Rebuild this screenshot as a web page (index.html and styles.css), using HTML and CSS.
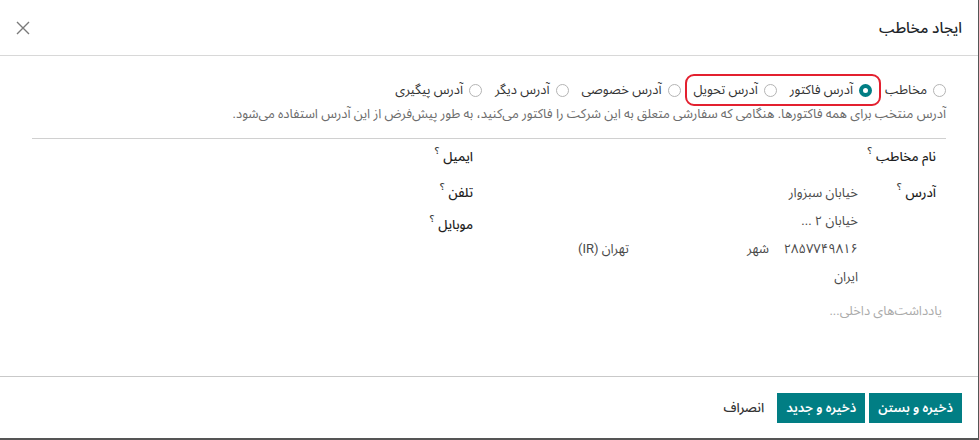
FILE: index.html
```html
<!DOCTYPE html>
<html lang="fa" dir="rtl">
<head>
<meta charset="utf-8">
<title>ایجاد مخاطب</title>
<link rel="stylesheet" href="styles.css">
</head>
<body>
<div class="modal">
  <header class="modal-header">
    <h4 class="modal-title">ایجاد مخاطب</h4>
    <button class="btn-close" type="button" aria-label="بستن">
      <svg width="14" height="14" viewBox="0 0 14 14"><path d="M1 1 L13 13 M13 1 L1 13" stroke="#7a7a7a" stroke-width="1.4" fill="none"/></svg>
    </button>
  </header>
  <main class="modal-body">
    <div class="sheet">
      <div class="radios">
        <label class="radio-item"><span class="radio"></span>مخاطب</label>
        <span class="highlight">
          <label class="radio-item"><span class="radio checked"></span>آدرس فاکتور</label>
          <label class="radio-item"><span class="radio"></span>آدرس تحویل</label>
        </span>
        <label class="radio-item"><span class="radio"></span>آدرس خصوصی</label>
        <label class="radio-item"><span class="radio"></span>آدرس دیگر</label>
        <label class="radio-item"><span class="radio"></span>آدرس پیگیری</label>
      </div>
      <p class="desc">آدرس منتخب برای همه فاکتورها. هنگامی که سفارشی متعلق به این شرکت را فاکتور می‌کنید، به طور پیش‌فرض از این آدرس استفاده می‌شود.</p>
      <hr class="sep">
      <div class="groups">
        <div class="group group-right">
          <div class="field field-name">
            <div class="lbl">نام مخاطب<sup>؟</sup></div>
            <div class="val"></div>
          </div>
          <div class="field">
            <div class="lbl">آدرس<sup>؟</sup></div>
            <div class="val address">
              <div class="line">خیابان سبزوار</div>
              <div class="line">خیابان ۲ ...</div>
              <div class="line line-split">
                <span class="cell cell-zip">۲۸۵۷۷۴۹۸۱۶</span>
                <span class="cell cell-city">شهر</span>
                <span class="cell cell-state">تهران (IR)</span>
              </div>
              <div class="line">ایران</div>
            </div>
          </div>
        </div>
        <div class="group group-left">
          <div class="field field-email">
            <div class="lbl">ایمیل<sup>؟</sup></div>
            <div class="val"></div>
          </div>
          <div class="field field-phone">
            <div class="lbl">تلفن<sup>؟</sup></div>
            <div class="val"></div>
          </div>
          <div class="field">
            <div class="lbl">موبایل<sup>؟</sup></div>
            <div class="val"></div>
          </div>
        </div>
      </div>
      <div class="notes">یادداشت‌های داخلی...</div>
    </div>
  </main>
  <footer class="modal-footer">
    <button class="btn btn-primary" type="button">ذخیره و بستن</button>
    <button class="btn btn-primary" type="button">ذخیره و جدید</button>
    <button class="btn btn-link" type="button">انصراف</button>
  </footer>
</div>
</body>
</html>
```

FILE: styles.css
```css
* { box-sizing: border-box; }

html, body {
  margin: 0;
  padding: 0;
  background: #ffffff;
}

body {
  font-family: Roboto, "Noto Sans Arabic", "Noto Naskh Arabic", "DejaVu Sans", sans-serif;
  font-size: 13px;
  color: #4a4a4a;
  direction: rtl;
}

.modal {
  width: 979px;
  height: 440px;
  border-right: 1px solid #555;
  border-bottom: 2px solid #555;
  display: flex;
  flex-direction: column;
  background: #fff;
}

.modal-header {
  height: 56px;
  flex: none;
  border-bottom: 1px solid #d8d8d8;
  padding: 0 16px;
  display: flex;
  align-items: center;
  justify-content: space-between;
}

.modal-title {
  margin: 0;
  font-size: 15px;
  font-weight: 500;
  color: #212529;
}

.btn-close {
  border: 0;
  background: transparent;
  padding: 0;
  width: 14px;
  height: 14px;
  display: flex;
  cursor: pointer;
}

.modal-body {
  flex: 1;
  padding: 24px 32px 0;
}

.radios {
  display: flex;
  align-items: center;
  gap: 13px;
  height: 20px;
  line-height: 20px;
  color: #333;
}

.highlight {
  position: relative;
  display: flex;
  align-items: center;
  gap: 13px;
  height: 20px;
}

.highlight::after {
  content: "";
  position: absolute;
  top: -6px;
  bottom: -6px;
  left: -9px;
  right: -9px;
  border: 2px solid #e3202f;
  border-radius: 9px;
  pointer-events: none;
}

.radio-item {
  display: flex;
  align-items: center;
  white-space: nowrap;
}

.radio {
  width: 13px;
  height: 13px;
  border: 1px solid #b4b4b4;
  border-radius: 50%;
  margin-left: 6px;
  background: #fff;
  flex: none;
}

.radio.checked {
  border: 4px solid #017e84;
  background: #fff;
}

.desc {
  margin: 5px 0 0;
  line-height: 18px;
  color: #6c6c6c;
  white-space: nowrap;
}

.sep {
  border: 0;
  border-top: 1px solid #d0d0d0;
  margin: 15px 0 4px;
  height: 0;
}

.groups {
  display: grid;
  grid-template-columns: 1fr 1fr;
  column-gap: 12px;
}

.group {
  padding-right: 10px;
}

.field {
  display: grid;
  grid-template-columns: 70px 1fr;
  column-gap: 8px;
  align-items: start;
}

.lbl {
  line-height: 28px;
  color: #1f1f1f;
  font-weight: 500;
  white-space: nowrap;
}

.lbl sup {
  font-size: 10px;
  color: #3a3a3a;
  margin-right: 4px;
  vertical-align: 7px;
  line-height: 0;
}

.field-name,
.field-email {
  margin-bottom: 8px;
}

.field-phone {
  margin-bottom: 4px;
}

.val {
  min-height: 28px;
}

.line {
  line-height: 28px;
  color: #4a4a4a;
}

.line-split {
  display: flex;
}

.cell-zip {
  width: 89px;
}

.cell-city {
  width: 140px;
}

.notes {
  margin-top: 6px;
  padding-right: 4px;
  line-height: 28px;
  color: #ababab;
}

.modal-footer {
  flex: none;
  height: 62px;
  border-top: 1px solid #c9c9c9;
  padding: 0 16px;
  display: flex;
  align-items: center;
  gap: 4px;
}

.btn {
  font-family: inherit;
  font-size: 13px;
  font-weight: 600;
  height: 30px;
  padding: 0 9px;
  border: 0;
  border-radius: 0;
  cursor: pointer;
}

.btn-primary {
  background: #017e84;
  color: #fff;
}

.btn-link {
  background: transparent;
  color: #333;
  font-weight: 500;
}
```
